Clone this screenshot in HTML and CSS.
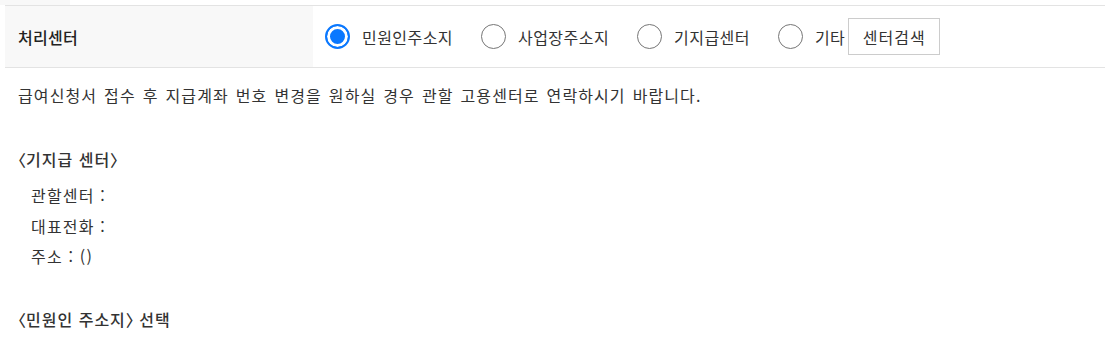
FILE: index.html
```html
<!DOCTYPE html>
<html lang="ko">
<head>
<meta charset="utf-8">
<link rel="stylesheet" href="styles.css">
</head>
<body>
<div class="page">
  <div class="top-strip"><div class="top-cell"></div></div>
  <table class="form-table">
    <tr>
      <th>처리센터</th>
      <td>
        <div class="radios">
          <label class="radio"><input type="radio" name="center" checked><span>민원인주소지</span></label>
          <label class="radio"><input type="radio" name="center"><span>사업장주소지</span></label>
          <label class="radio"><input type="radio" name="center"><span>기지급센터</span></label>
          <label class="radio last"><input type="radio" name="center"><span>기타</span></label>
          <button type="button" class="btn">센터검색</button>
        </div>
      </td>
    </tr>
  </table>
  <p class="notice">급여신청서 접수 후 지급계좌 번호 변경을 원하실 경우 관할 고용센터로 연락하시기 바랍니다.</p>
  <h4 class="sub-title"><span class="br">〈</span>기지급 센터<span class="br">〉</span></h4>
  <ul class="info">
    <li>관할센터 :</li>
    <li>대표전화 :</li>
    <li>주소 : ()</li>
  </ul>
  <h4 class="sub-title second"><span class="br">〈</span>민원인 주소지<span class="br">〉</span> 선택</h4>
</div>
</body>
</html>
```

FILE: styles.css
```css
html, body {
  margin: 0;
  padding: 0;
  background: #fff;
}
body {
  font-family: "Noto Sans CJK KR", "Noto Sans", sans-serif;
  font-size: 16px;
  color: #333;
}
.page {
  width: 1115px;
}
.top-strip {
  height: 5px;
}
.top-cell {
  width: 70px;
  height: 5px;
  background: #f8f8f8;
}
.form-table {
  margin: 0 10px 0 5px;
  width: 1100px;
  border-collapse: collapse;
  border-top: 1px solid #e3e3e3;
  border-bottom: 1px solid #e3e3e3;
}
.form-table th {
  width: 295px;
  height: 61px;
  padding: 0 0 0 13px;
  background: #f8f8f8;
  text-align: left;
  font-weight: 500;
  color: #222;
  letter-spacing: 0.3px;
}
.form-table td {
  padding: 0 0 0 12px;
}
.radios {
  display: flex;
  align-items: center;
}
.radio {
  display: flex;
  align-items: center;
  margin-right: 28px;
  letter-spacing: 0.45px;
  color: #333;
}
.radio.last {
  margin-right: 3px;
}
.radio input {
  appearance: none;
  -webkit-appearance: none;
  box-sizing: border-box;
  width: 25px;
  height: 25px;
  margin: 0 12px 0 0;
  border: 1.5px solid #767676;
  border-radius: 50%;
  background: #fff;
}
.radio input:checked {
  border: 2.5px solid #0a78ff;
  background: #0a78ff;
  box-shadow: inset 0 0 0 3px #fff;
}
.btn {
  font-family: inherit;
  font-size: 16px;
  letter-spacing: 1px;
  color: #333;
  background: #fff;
  border: 1px solid #ccc;
  width: 92px;
  height: 37px;
  padding: 0;
  margin: 0;
}
.notice {
  margin: 15px 0 0 18px;
  line-height: 24px;
  letter-spacing: 1.1px;
  word-spacing: 1.4px;
}
.sub-title {
  margin: 40px 0 0 18px;
  font-size: 16px;
  font-weight: 500;
  line-height: 24px;
  color: #333;
  letter-spacing: 1px;
}
.br {
  font-feature-settings: "halt" 1;
  letter-spacing: 0;
}
.sub-title.second {
  margin-top: 35px;
}
.info {
  list-style: none;
  margin: 9px 0 0 31px;
  padding: 0;
}
.info li {
  line-height: 30.5px;
  letter-spacing: 1.2px;
}
```
